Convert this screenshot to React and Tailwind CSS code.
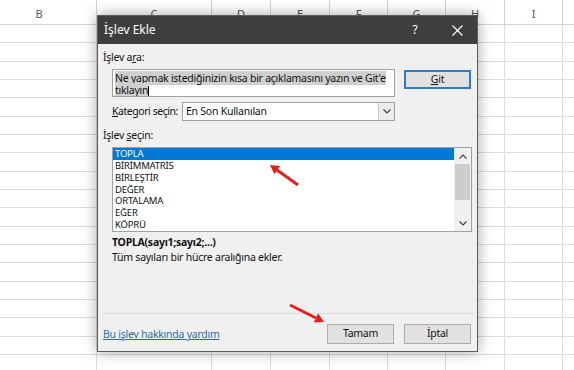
const columns = [
  { label: 'B', w: 'w-[115px]' },
  { label: 'C', w: 'w-[115px]' },
  { label: 'D', w: 'w-[59px]' },
  { label: 'E', w: 'w-[59px]' },
  { label: 'F', w: 'w-[58px]' },
  { label: 'G', w: 'w-[58px]' },
  { label: 'H', w: 'w-[59px]' },
  { label: 'I', w: 'w-[58px]' },
  { label: '', w: 'w-[58px]' },
];

const functions = ['TOPLA', 'BİRİMMATRİS', 'BİRLEŞTİR', 'DEĞER', 'ORTALAMA', 'EĞER', 'KÖPRÜ'];

const rows = Array.from({ length: 19 }, (_, i) => i);

const Chevron = ({ up }) => (
  <svg width="8" height="5" viewBox="0 0 8 5" fill="none">
    <path
      d={up ? 'M0.5 4.5 L4 1 L7.5 4.5' : 'M0.5 0.5 L4 4 L7.5 0.5'}
      stroke="#404040"
      strokeWidth="1.2"
    />
  </svg>
);

const Sheet = () => {
  return (
    <div className="flex flex-col ml-[-18px]">
      <div className="flex h-[25px]">
        {columns.map((c, i) => (
          <div
            key={i}
            className={`${c.w} shrink-0 h-full border-r border-b border-[#d4d4d4] flex justify-center pt-[8px] leading-[11px] text-[11px] text-[#555]`}
          >
            {c.label}
          </div>
        ))}
      </div>
      {rows.map((r) => (
        <div key={r} className="flex h-[18.33px]">
          {columns.map((c, i) => (
            <div key={i} className={`${c.w} shrink-0 h-full border-r border-b border-[#dcdcdc]`}></div>
          ))}
        </div>
      ))}
    </div>
  );
};

const Dialog = () => {
  return (
    <div className="absolute left-[97px] top-[15px] w-[381px] h-[337px] border border-[#5c5c5c] bg-[#f0f0f0] shadow-[0_0_14px_rgba(0,0,0,0.35)] flex flex-col">
      {/* title bar */}
      <div className="h-[28px] bg-[#3e3e3e] flex items-center text-white">
        <span className="pl-[6px] text-[12px]">İşlev Ekle</span>
        <span className="ml-auto w-[30px] text-center text-[12px]">?</span>
        <span className="ml-[12px] mr-[5px] w-[30px] flex justify-center">
          <svg width="11" height="11" viewBox="0 0 11 11">
            <path d="M0.5 0.5 L10.5 10.5 M10.5 0.5 L0.5 10.5" stroke="#fff" strokeWidth="1.1" />
          </svg>
        </span>
      </div>

      <div className="flex-1 flex flex-col px-[5px] text-[10.5px] tracking-[-0.25px] text-[#111]">
        <div className="mt-[6px] leading-[14px]">
          İşlev a<span className="underline">r</span>a:
        </div>

        <div className="flex items-start mt-[5px] ml-[9px]">
          <div className="w-[283px] h-[28px] shrink-0 bg-white border border-[#a0a0a0] pl-[2px] pt-[2px] leading-[12px] whitespace-nowrap overflow-hidden">
            <span className="bg-[#cfcfcf]">Ne yapmak istediğinizin kısa bir açıklamasını yazın ve Git'e</span>
            <br />
            <span className="bg-[#cfcfcf]">tıklayın</span>
            <span className="inline-block w-[1px] h-[11px] bg-black align-middle"></span>
          </div>
          <div className="ml-[9px] mt-[1px] w-[67px] h-[19px] bg-[#e1e1e1] border-2 border-[#2f7cc4] flex items-center justify-center">
            <span>
              <span className="underline">G</span>it
            </span>
          </div>
        </div>

        <div className="flex items-center mt-[5px] ml-[9px]">
          <span className="w-[70px] shrink-0 whitespace-nowrap tracking-[-0.45px]">
            <span className="underline">K</span>ategori seçin:
          </span>
          <div className="w-[213px] h-[19px] bg-white border border-[#a0a0a0] flex items-center">
            <span className="pl-[3px]">En Son Kullanılan</span>
            <span className="ml-auto w-[16px] h-full border-l border-[#c8c8c8] bg-[#ececec] flex items-center justify-center">
              <Chevron />
            </span>
          </div>
        </div>

        <div className="mt-[7px] leading-[14px]">
          İşlev <span className="underline">s</span>eçin:
        </div>

        <div className="mt-[5px] ml-[9px] w-[360px] h-[85px] bg-white border border-[#9aa3ad] flex text-[9.5px] tracking-[-0.2px]">
          <div className="flex-1 flex flex-col">
            {functions.map((f, i) => (
              <div
                key={f}
                className={`h-[11.85px] leading-[11.85px] pl-[2px] ${i === 0 ? 'bg-[#0078d7] text-white' : ''}`}
              >
                {f}
              </div>
            ))}
          </div>
          <div className="w-[17px] flex flex-col bg-[#f0f0f0]">
            <div className="h-[16px] flex items-center justify-center">
              <Chevron up />
            </div>
            <div className="h-[36px] mx-[1px] bg-[#cdcdcd]"></div>
            <div className="flex-1"></div>
            <div className="h-[16px] flex items-center justify-center">
              <Chevron />
            </div>
          </div>
        </div>

        <div className="mt-[3px] ml-[9px] leading-[14px] font-bold">TOPLA(sayı1;sayı2;...)</div>
        <div className="mt-[1px] ml-[9px] leading-[14px]">Tüm sayıları bir hücre aralığına ekler.</div>

        <div className="mt-[49px] w-[369px] h-[1px] bg-[#dadada]"></div>

        <div className="flex items-start mt-[10px]">
          <span className="mt-[3px] text-[#2f6ba8] underline">Bu işlev hakkında yardım</span>
          <div className="ml-auto w-[67px] h-[20px] bg-[#e1e1e1] border border-[#adadad] flex items-center justify-center">
            Tamam
          </div>
          <div className="ml-[10px] mr-[1px] w-[67px] h-[20px] bg-[#e1e1e1] border border-[#adadad] flex items-center justify-center">
            İptal
          </div>
        </div>
      </div>
    </div>
  );
};

const Arrows = () => (
  <svg className="absolute left-0 top-0 pointer-events-none" width="574" height="370">
    <line x1="298" y1="185" x2="277" y2="170" stroke="#e3201b" strokeWidth="3" />
    <polygon points="270,165 280.2,166.1 274.4,174.3" fill="#e3201b" />
    <line x1="290" y1="305" x2="316" y2="318" stroke="#e3201b" strokeWidth="3" />
    <polygon points="324,322 313.8,322.5 318.2,313.5" fill="#e3201b" />
  </svg>
);

export default function App() {
  return (
    <div
      className="relative w-[574px] h-[370px] overflow-hidden bg-white"
      style={{ fontFamily: '"Noto Sans", "Open Sans", sans-serif' }}
    >
      <Sheet />
      <Dialog />
      <Arrows />
    </div>
  );
}
